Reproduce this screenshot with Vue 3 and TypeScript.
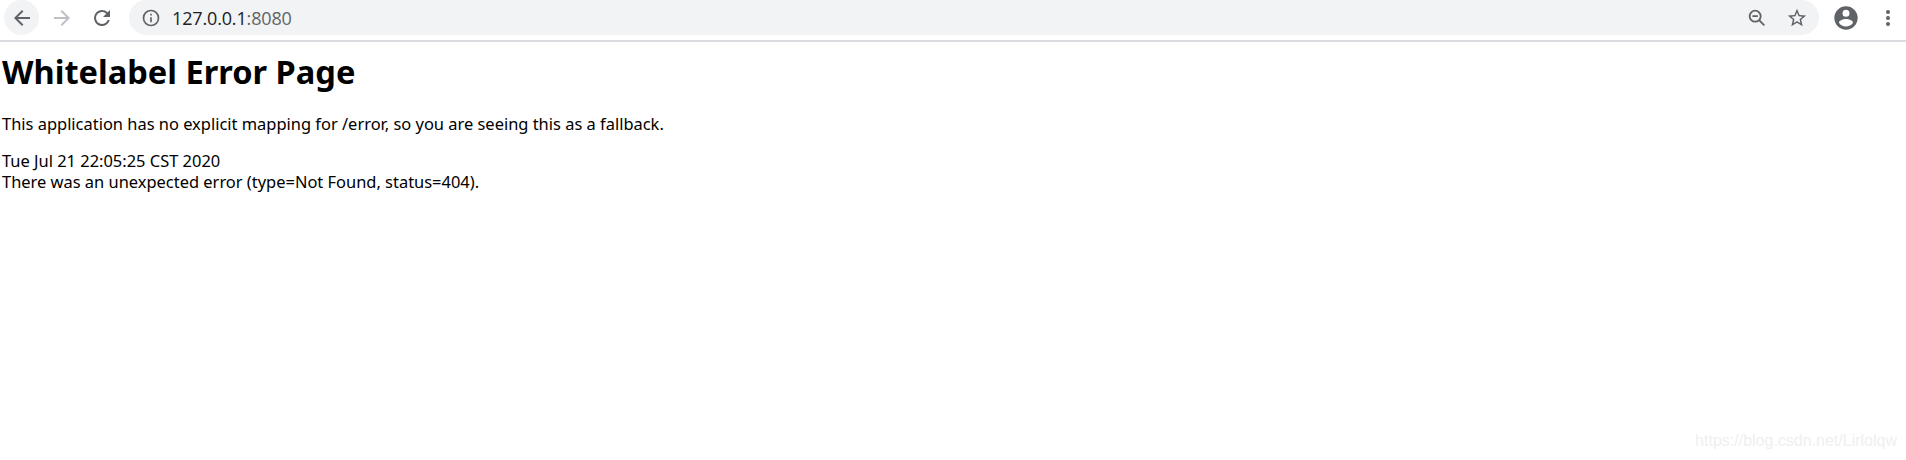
<script setup lang="ts">
const url = { host: '127.0.0.1', port: ':8080' }
</script>

<template>
  <div class="page">
    <header class="toolbar">
      <div class="nav">
        <button class="nav-btn back" aria-label="Back">
          <svg width="24" height="24" viewBox="0 0 24 24"><path d="M20 11H7.83l5.59-5.59L12 4l-8 8 8 8 1.41-1.41L7.83 13H20z" fill="#5f6368"/></svg>
        </button>
        <button class="nav-btn" aria-label="Forward">
          <svg width="24" height="24" viewBox="0 0 24 24"><path d="M4 11h12.17l-5.59-5.59L12 4l8 8-8 8-1.41-1.41L16.17 13H4z" fill="#bdc1c6"/></svg>
        </button>
        <button class="nav-btn" aria-label="Reload">
          <svg width="24" height="24" viewBox="0 0 24 24"><path d="M17.65 6.35A7.96 7.96 0 0 0 12 4a8 8 0 1 0 7.73 10h-2.08A6 6 0 1 1 12 6c1.66 0 3.14.69 4.22 1.78L13 11h7V4z" fill="#5f6368"/></svg>
        </button>
      </div>
      <div class="omnibox">
        <svg class="info" width="20" height="20" viewBox="0 0 24 24"><path d="M11 7h2v2h-2zm0 4h2v6h-2zm1-9a10 10 0 1 0 0 20 10 10 0 0 0 0-20zm0 18a8 8 0 1 1 0-16 8 8 0 0 1 0 16z" fill="#5f6368"/></svg>
        <span class="url"><span class="host">{{ url.host }}</span><span class="port">{{ url.port }}</span></span>
        <span class="spacer"></span>
        <svg class="zoom" width="22" height="22" viewBox="0 0 24 24" fill="none" stroke="#5f6368" stroke-width="2"><circle cx="10" cy="10" r="6"/><path d="M14.5 14.5L20 20M7 10h6"/></svg>
        <svg class="star" width="22" height="22" viewBox="0 0 24 24"><path d="M22 9.24l-7.19-.62L12 2 9.19 8.63 2 9.24l5.46 4.73L5.82 21 12 17.27 18.18 21l-1.63-7.03L22 9.24zM12 15.4l-3.76 2.27 1-4.28-3.32-2.88 4.38-.38L12 6.1l1.71 4.04 4.38.38-3.32 2.88 1 4.28L12 15.4z" fill="#5f6368"/></svg>
      </div>
      <div class="actions">
        <svg width="28" height="28" viewBox="0 0 24 24"><path d="M12 2a10 10 0 1 0 0 20 10 10 0 0 0 0-20zm0 3a3 3 0 1 1 0 6 3 3 0 0 1 0-6zm0 14.2a7.2 7.2 0 0 1-6-3.22c.03-1.99 4-3.08 6-3.08s5.97 1.09 6 3.08a7.2 7.2 0 0 1-6 3.22z" fill="#5f6368"/></svg>
        <svg class="menu" width="4" height="18" viewBox="0 0 4 18"><circle cx="2" cy="3" r="2" fill="#5f6368"/><circle cx="2" cy="9" r="2" fill="#5f6368"/><circle cx="2" cy="15" r="2" fill="#5f6368"/></svg>
      </div>
    </header>
    <main class="content">
      <h1>Whitelabel Error Page</h1>
      <p>This application has no explicit mapping for /error, so you are seeing this as a fallback.</p>
      <div>Tue Jul 21 22:05:25 CST 2020</div>
      <div>There was an unexpected error (type=Not Found, status=404).</div>
    </main>
    <span class="watermark">https://blog.csdn.net/Lirlolqw</span>
  </div>
</template>

<style>
html, body { margin: 0; background: #fff; }
</style>

<style scoped>
.page {
  position: relative;
  width: 1906px;
  height: 460px;
  overflow: hidden;
  background: #fff;
  font-family: "Noto Sans", sans-serif;
  color: #000;
}
.toolbar {
  display: flex;
  align-items: flex-start;
  height: 40px;
  border-bottom: 2px solid #dadce0;
}
.nav {
  display: flex;
  gap: 5px;
  padding-left: 4px;
  margin-right: 10px;
}
.nav-btn {
  width: 35px;
  height: 35px;
  padding: 0;
  border: 0;
  border-radius: 50%;
  background: transparent;
  display: flex;
  align-items: center;
  justify-content: center;
}
.back { background: #f1f3f4; }
.omnibox {
  flex: 1;
  height: 35px;
  display: flex;
  align-items: center;
  background: #f1f3f4;
  border-radius: 18px;
  padding: 0 11px 0 12px;
}
.url {
  margin-left: 11px;
  font-size: 18px;
  font-family: "Open Sans", "Noto Sans", sans-serif;
  letter-spacing: -0.15px;
}
.host { color: #202124; }
.port { color: #5f6368; }
.spacer { flex: 1; }
.zoom { margin-right: 18px; }
.actions {
  width: 87px;
  height: 35px;
  display: flex;
  align-items: center;
  justify-content: flex-start;
  gap: 26px;
  padding-left: 13px;
  box-sizing: border-box;
}
.content {
  padding: 0 2px;
  font-size: 16.45px;
  line-height: 21px;
}
h1 {
  margin: 8px 0 19px;
  font-size: 32.6px;
  line-height: 44px;
  font-weight: 700;
}
p { margin: 0 0 16px; }
.watermark {
  position: absolute;
  right: 9px;
  bottom: 10px;
  font-family: "Liberation Sans", sans-serif;
  font-size: 16px;
  color: #efefef;
}
</style>
